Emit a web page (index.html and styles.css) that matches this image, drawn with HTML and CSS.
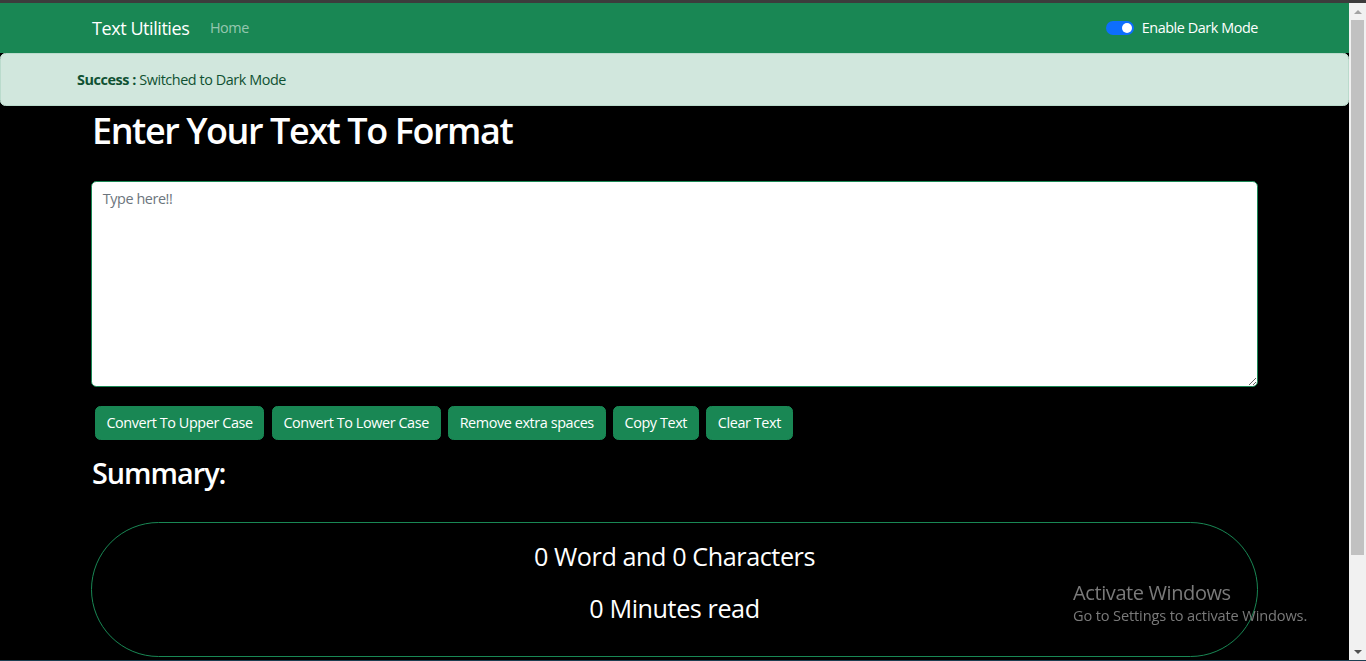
FILE: index.html
```html
<!DOCTYPE html>
<html lang="en">
<head>
<meta charset="utf-8">
<title>Text Utilities</title>
<link rel="stylesheet" href="styles.css">
</head>
<body>
<div class="topbar"></div>
<div class="window">
  <div class="viewport">
    <nav class="navbar">
      <div class="nav-inner">
        <a class="brand" href="#">Text Utilities</a>
        <a class="nav-link" href="#">Home</a>
        <div class="switch-wrap">
          <span class="switch"><span class="knob"></span></span>
          <label class="switch-label">Enable Dark Mode</label>
        </div>
      </div>
    </nav>
    <div class="alert"><strong>Success :</strong> Switched to Dark Mode</div>
    <main class="container">
      <h1 class="title">Enter Your Text To Format</h1>
      <textarea class="text-box" placeholder="Type here!!"></textarea>
      <div class="btns">
        <button class="btn">Convert To Upper Case</button>
        <button class="btn">Convert To Lower Case</button>
        <button class="btn">Remove extra spaces</button>
        <button class="btn">Copy Text</button>
        <button class="btn">Clear Text</button>
      </div>
      <h2 class="sub">Summary:</h2>
      <div class="summary">
        <h3 class="stat">0 Word and 0 Characters</h3>
        <h3 class="stat stat-2">0 Minutes read</h3>
      </div>
    </main>
  </div>
  <div class="scrollbar">
    <div class="sb-btn"><span class="arrow-up"></span></div>
    <div class="sb-track">
      <div class="sb-thumb"></div>
    </div>
    <div class="sb-btn"><span class="arrow-down"></span></div>
  </div>
</div>
<div class="taskline"></div>
<div class="watermark">
  <div class="wm-title">Activate Windows</div>
  <div class="wm-sub">Go to Settings to activate Windows.</div>
</div>
</body>
</html>
```
FILE: styles.css
```css
html, body {
  margin: 0;
  padding: 0;
  overflow: hidden;
  background: #000;
}
body {
  font-family: "Open Sans", "Noto Sans", sans-serif;
  font-size: 14.4px;
  line-height: 1.5;
  letter-spacing: -0.03em;
  color: #fff;
}
.topbar {
  height: 3px;
  background: #3c3c3c;
}
.window {
  height: 657px;
  display: flex;
}
.viewport {
  flex: 1;
  min-width: 0;
  overflow: hidden;
  background: #000;
}
.taskline {
  height: 1px;
  background: #1d3f52;
}

/* fake window scrollbar */
.scrollbar {
  width: 17px;
  background: #f1f1f1;
  display: flex;
  flex-direction: column;
}
.sb-btn {
  height: 17px;
  display: flex;
  align-items: center;
  justify-content: center;
}
.arrow-up {
  width: 0;
  height: 0;
  border-left: 4px solid transparent;
  border-right: 4px solid transparent;
  border-bottom: 4px solid #a3a3a3;
}
.arrow-down {
  width: 0;
  height: 0;
  border-left: 4px solid transparent;
  border-right: 4px solid transparent;
  border-top: 4px solid #505050;
}
.sb-track {
  flex: 1;
  padding: 0 2px;
}
.sb-thumb {
  height: 535px;
  background: #c1c1c1;
}

/* navbar */
.navbar {
  background: #198754;
  height: 50px;
}
.nav-inner {
  margin: 0 91px;
  height: 100%;
  display: flex;
  align-items: center;
}
.brand {
  color: #fff;
  text-decoration: none;
  font-size: 18px;
  margin-left: 1px;
  margin-right: 13.4px;
}
.nav-link {
  color: rgba(255, 255, 255, 0.55);
  text-decoration: none;
  padding: 0 7.2px;
}
.switch-wrap {
  margin-left: auto;
  display: flex;
  align-items: center;
}
.switch {
  width: 28px;
  height: 14px;
  border-radius: 7px;
  background: #0d6efd;
  display: flex;
  align-items: center;
  justify-content: flex-end;
  padding: 0 2px;
  box-sizing: border-box;
}
.knob {
  width: 10px;
  height: 10px;
  border-radius: 50%;
  background: #fff;
}
.switch-label {
  margin-left: 8px;
  color: #fff;
}

/* alert */
.alert {
  background: #d1e7dd;
  border: 1px solid #badbcc;
  border-radius: 5.4px;
  color: #0f5132;
  padding: 15.4px 14.4px 14.4px 76px;
}
.alert strong {
  font-weight: 700;
}

/* main */
.container {
  margin: 0 91px;
}
.title {
  font-size: 36px;
  font-weight: 600;
  line-height: 1.2;
  letter-spacing: -0.04em;
  margin: 3px 0 28px 1px;
}
.text-box {
  display: block;
  width: 100%;
  height: 206px;
  box-sizing: border-box;
  border: 1px solid #198754;
  border-radius: 5.4px;
  background: #fff;
  color: #212529;
  font-family: inherit;
  font-size: 14.4px;
  line-height: 1.5;
  letter-spacing: -0.03em;
  padding: 6px 10.8px 5px;
  margin: 0;
}
.text-box::placeholder {
  color: #6c757d;
}
.btns {
  margin-top: 15.4px;
  display: flex;
  flex-wrap: wrap;
}
.btn {
  margin: 3.6px;
  background: #198754;
  border: 1px solid #198754;
  color: #fff;
  font-family: inherit;
  font-size: 14.4px;
  letter-spacing: -0.028em;
  line-height: 21.6px;
  padding: 5.4px 10.8px;
  border-radius: 5.4px;
}
.sub {
  font-size: 28.8px;
  font-weight: 600;
  line-height: 1.2;
  letter-spacing: -0.035em;
  margin: 12.4px 0 31.4px 1px;
}
.summary {
  border: 1px solid #198754;
  border-radius: 70px;
  height: 135px;
  box-sizing: border-box;
  padding-top: 18px;
  text-align: center;
  margin-bottom: 111px;
}
.stat {
  font-size: 25.2px;
  font-weight: 400;
  line-height: 30.24px;
  margin: 0;
}
.stat-2 {
  margin-top: 21.8px;
}

/* windows watermark */
.watermark {
  position: fixed;
  left: 1073px;
  top: 581px;
  color: #7a7a7a;
  letter-spacing: -0.01em;
}
.wm-title {
  font-size: 20px;
  line-height: 24px;
  letter-spacing: -0.02em;
}
.wm-sub {
  font-size: 14.6px;
  line-height: 20px;
}
```
